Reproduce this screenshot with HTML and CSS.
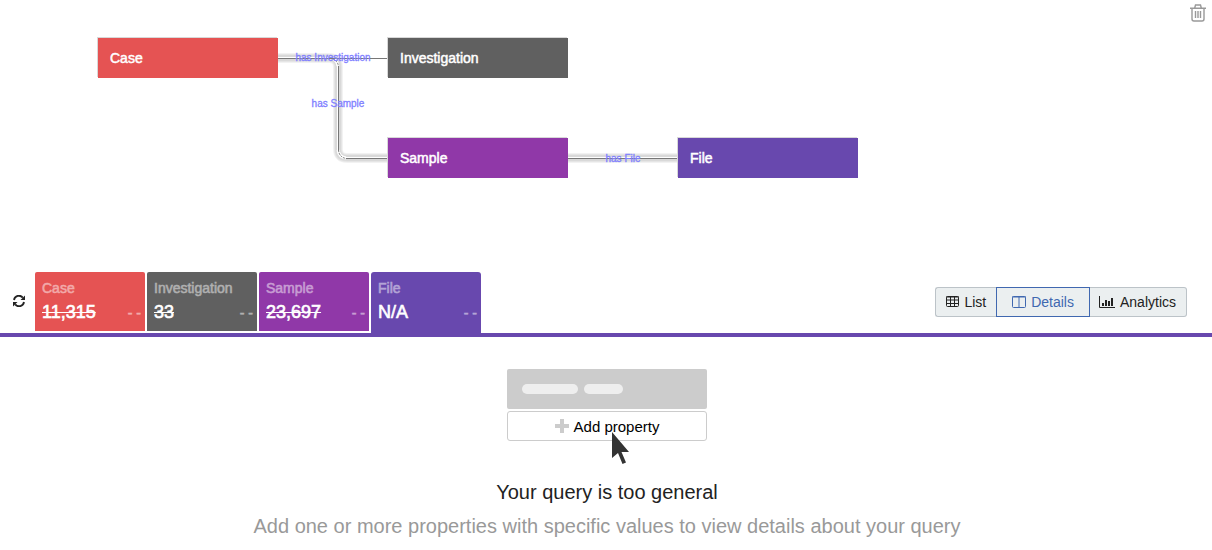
FILE: index.html
```html
<!DOCTYPE html>
<html lang="en">
<head>
    <meta charset="UTF-8">
    <meta name="viewport" content="width=device-width, initial-scale=1.0">
    <title>Query Builder</title>
    <link rel="stylesheet" href="styles.css">
</head>
<body>
    <!-- query graph -->
    <section class="graph">
        <svg class="edges" width="860" height="200" aria-hidden="true">
            <g fill="none" stroke="#000" stroke-opacity="0.05">
                <path d="M278 58H329Q338 58 338 67V149Q338 158 347 158H388M568 158H678" stroke-width="10"/>
                <path d="M278 58H329Q338 58 338 67V149Q338 158 347 158H388M568 158H678" stroke-width="8"/>
                <path d="M278 58H329Q338 58 338 67V149Q338 158 347 158H388M568 158H678" stroke-width="6"/>
            </g>
            <path d="M278 57.500H330M337.500 66V150M346 157.500H388M568 157.500H678" fill="none" stroke="#fff"/>
            <path d="M330 58Q337 59 338 66M338 150Q339 157 346 158" fill="none" stroke="#fff" stroke-width="3"/>
            <path d="M278 58.500H388M338.500 66V150M346 158.500H388M568 158.500H678" fill="none" stroke="#777"/>
            <path d="M330 58.500Q337 59 338.500 66M338.500 150Q339 157 346 158.500" fill="none" stroke="#777" stroke-dasharray="2 1"/>
        </svg>
        <span class="edge-label label-investigation">has Investigation</span>
        <span class="edge-label label-sample">has Sample</span>
        <span class="edge-label label-file">has File</span>
        <div class="node node-case red">Case</div>
        <div class="node node-investigation gray">Investigation</div>
        <div class="node node-sample purple">Sample</div>
        <div class="node node-file violet">File</div>
        <button class="trash" type="button" aria-label="Clear query">
            <svg width="16" height="18" viewBox="0 0 16 18" fill="none" stroke="#999" stroke-width="1.4">
                <path d="M0 4.300H16M4.700 4L5.500 1H10.500L11.300 4M2 4.500V15Q2 17 4 17H12Q14 17 14 15V4.500M5.500 7V14M8 7V14M10.500 7V14"/>
            </svg>
        </button>
    </section>

    <!-- result bar -->
    <section class="bar">
        <button class="refresh" type="button" aria-label="Refresh counts">
            <svg width="12" height="12" viewBox="0 0 12 12">
                <path d="M1 5A5 5 0 0 1 9.800 2.600M11 7A5 5 0 0 1 2.200 9.400" fill="none" stroke="#222" stroke-width="1.800"/>
                <path d="M12 0.500V5H7.500ZM0 11.500V7H4.500Z" fill="#222"/>
            </svg>
        </button>
        <div class="tabs">
            <button class="tab red" type="button">
                <span class="tab-name">Case</span>
                <span class="tab-row"><s class="count">11,315</s><span class="dash">- -</span></span>
            </button>
            <button class="tab gray" type="button">
                <span class="tab-name">Investigation</span>
                <span class="tab-row"><s class="count">33</s><span class="dash">- -</span></span>
            </button>
            <button class="tab purple" type="button">
                <span class="tab-name">Sample</span>
                <span class="tab-row"><s class="count">23,697</s><span class="dash">- -</span></span>
            </button>
            <button class="tab violet selected" type="button">
                <span class="tab-name">File</span>
                <span class="tab-row"><span class="count">N/A</span><span class="dash">- -</span></span>
            </button>
        </div>
        <div class="views">
            <button class="view" type="button">
                <svg width="13" height="11" viewBox="0 0 13 11" fill="none" stroke="#222">
                    <rect x="0.500" y="0.500" width="12" height="10" rx="1"/>
                    <path d="M0 1H13M0 4H13M0 7.500H13M4.500 1V11M8.500 1V11"/>
                </svg>
                List
            </button>
            <button class="view active" type="button">
                <svg width="14" height="12" viewBox="0 0 14 12" fill="none" stroke="#4068b0">
                    <rect x="0.500" y="0.500" width="13" height="11" rx="1"/>
                    <path d="M0 1H14M7 1V12"/>
                </svg>
                Details
            </button>
            <button class="view" type="button">
                <svg width="16" height="12" viewBox="0 0 16 12">
                    <path d="M0.500 0V11.500H16" fill="none" stroke="#222"/>
                    <path d="M3 7H5V10H3ZM6 4H8V10H6ZM9 5H11V10H9ZM12 2H14V10H12Z" fill="#222"/>
                </svg>
                Analytics
            </button>
        </div>
    </section>

    <!-- empty state -->
    <main class="empty">
        <div class="sketch">
            <div class="placeholder">
                <span class="pill pill-long"></span>
                <span class="pill"></span>
            </div>
            <button class="add" type="button">
                <svg width="14" height="14" viewBox="0 0 14 14"><path d="M5 0H9V5H14V9H9V14H5V9H0V5H5Z" fill="#ccc"/></svg>
                Add property
            </button>
            <svg class="cursor" width="17" height="32" viewBox="0 0 17 32" aria-hidden="true">
                <path d="M0 0V26L6 21L10.500 32L14 30.500L9.500 20H17Z" fill="#333"/>
            </svg>
        </div>
        <h1 class="title">Your query is too general</h1>
        <p class="hint">Add one or more properties with specific values to view details about your query</p>
    </main>
</body>
</html>
```
FILE: styles.css
```css
* {
    box-sizing: border-box;
    margin: 0;
    padding: 0;
}
body {
    background-color: #fff;
    color: #222;
    font-family: "Liberation Sans", Arial, sans-serif;
    font-size: 14px;
}
button {
    font: inherit;
    color: inherit;
    border: none;
    background: none;
    cursor: pointer;
}
svg {
    display: block;
    flex: none;
}
.red { background-color: #e55353; }
.gray { background-color: #606060; }
.purple { background-color: #9038a8; }
.violet { background-color: #6848ae; }

/* graph canvas */
.graph {
    position: relative;
    height: 272px;
    overflow: hidden;
}
.edges {
    position: absolute;
    top: 0;
    left: 0;
}
.node {
    position: absolute;
    width: 180px;
    height: 40px;
    padding: 0 12px;
    line-height: 40px;
    color: #fff;
    -webkit-text-stroke: 0.5px #fff;
    box-shadow: -1px -1px 0 #d8d8d8;
}
.node-case { left: 98px; top: 38px; }
.node-investigation { left: 388px; top: 38px; }
.node-sample { left: 388px; top: 138px; }
.node-file { left: 678px; top: 138px; }
.edge-label {
    position: absolute;
    font-size: 10px;
    line-height: 12px;
    color: #8080ff;
    -webkit-text-stroke: 0.3px #8080ff;
    white-space: nowrap;
    transform: translate(-50%, -50%);
}
.label-investigation { left: 333px; top: 58px; }
.label-sample { left: 338px; top: 104px; }
.label-file { left: 623px; top: 159px; }
.trash {
    position: absolute;
    top: 4px;
    right: 6px;
}

/* result bar */
.bar {
    display: flex;
    align-items: center;
    padding-right: 25px;
    border-bottom: 4px solid #6848ae;
}
.refresh {
    margin: 0 10px 4px 13px;
}
.tabs {
    display: flex;
    gap: 2px;
    height: 61px;
}
.tab {
    display: flex;
    flex-direction: column;
    width: 110px;
    height: 59px;
    padding: 7px 4px 0 7px;
    border-radius: 2px 2px 0 0;
    color: #fff;
    text-align: left;
}
.tab.selected {
    height: 61px;
    border-radius: 3px 3px 0 0;
}
.tab-name {
    line-height: 18px;
    opacity: 0.5;
    -webkit-text-stroke: 0.5px #fff;
}
.tab-row {
    display: flex;
    justify-content: space-between;
    align-items: baseline;
    align-self: stretch;
    line-height: 30px;
}
.count {
    font-size: 18px;
    -webkit-text-stroke: 0.6px #fff;
}
.dash {
    opacity: 0.5;
    -webkit-text-stroke: 0.5px #fff;
}
.views {
    display: flex;
    margin: 0 0 2px auto;
}
.view {
    display: flex;
    align-items: center;
    gap: 5px;
    height: 30px;
    padding: 0 10px;
    background-color: #ebeff0;
    border: 1px solid #bcc3c8;
}
.view:first-child {
    border-right: none;
    border-radius: 3px 0 0 3px;
}
.view:last-child {
    padding-left: 9px;
    border-left: none;
    border-radius: 0 3px 3px 0;
}
.view.active {
    padding: 0 15px;
    color: #4068b0;
    border-color: #4068b0;
}

/* empty state */
.empty {
    display: flex;
    flex-direction: column;
    align-items: center;
    padding: 32px 0 0 2px;
    text-align: center;
}
.sketch {
    position: relative;
    display: flex;
    flex-direction: column;
    gap: 2px;
    width: 200px;
}
.placeholder {
    display: flex;
    align-items: center;
    gap: 6px;
    height: 40px;
    padding-left: 15px;
    border-radius: 2px;
    background-color: #ccc;
}
.pill {
    width: 39px;
    height: 10px;
    border-radius: 5px;
    background-color: #eee;
}
.pill-long {
    width: 56px;
}
.add {
    display: flex;
    align-items: center;
    justify-content: center;
    gap: 5px;
    height: 30px;
    border: 1px solid #ccc;
    border-radius: 3px;
    font-size: 15px;
    color: #000;
}
.cursor {
    position: absolute;
    left: 105px;
    top: 63px;
}
.title {
    margin-top: 34px;
    font-size: 20px;
    font-weight: normal;
    line-height: 34px;
}
.hint {
    font-size: 20px;
    line-height: 34px;
    color: #999;
}
```
